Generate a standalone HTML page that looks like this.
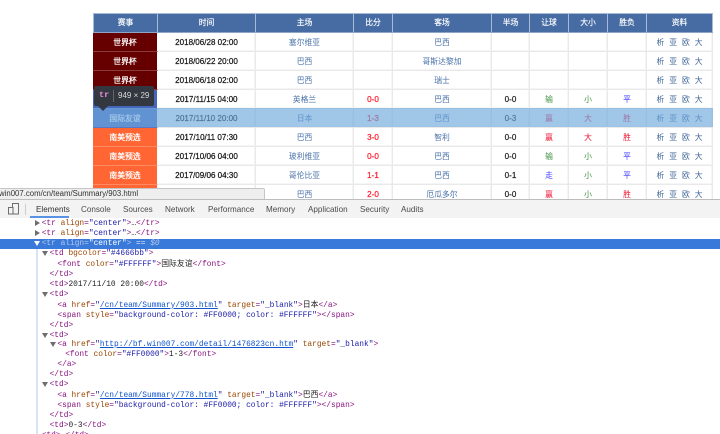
<!DOCTYPE html>
<html lang="zh">
<head>
<meta charset="utf-8">
<title>赛事</title>
<style>
html,body{margin:0;padding:0;background:#fff;}
body{width:720px;height:434px;overflow:hidden;position:relative;font-family:"Liberation Sans","Noto Sans CJK SC",sans-serif;}
#wrap{position:absolute;left:0;top:0;width:720px;height:434px;overflow:hidden;filter:blur(.3px);}
table{position:absolute;left:93px;top:13px;border-collapse:separate;border-spacing:0;table-layout:fixed;width:620px;font-size:7.8px;color:#222;}
td,th{text-align:center;white-space:nowrap;overflow:hidden;}
td{padding:1px 0 0;height:17px;line-height:17px;border-right:1px solid #e9e9e9;border-bottom:1px solid #e9e9e9;box-shadow:inset -1px -1px 0 #f5f5f5;}
th{padding:0;background:#466ca3;color:#fff;font-weight:normal;height:18px;line-height:18px;border-right:1px solid #a8bbd6;border-top:1px solid #a8bbd6;border-bottom:1px solid #8ea5c6;-webkit-text-stroke:.15px #fff;}
th:first-child{border-left:1px solid #a8bbd6;}
.w{background:#660000;color:#fff;-webkit-text-stroke:.25px #fff;border-right:1px solid #fff;border-bottom:1px solid #8a3a3a;box-shadow:none;}
.f{background:#4666bb;color:#fff;-webkit-text-stroke:.25px #fff;border-right:1px solid #fff;border-bottom:1px solid #5a78c6;box-shadow:none;}
.s{background:#ff6633;color:#fff;-webkit-text-stroke:.25px #fff;border-right:1px solid #fff;border-bottom:1px solid #ff8a63;box-shadow:none;}
.t{font-size:8.05px;color:#111;-webkit-text-stroke:.2px #111;}
.l{color:#4a72aa;}
.r{color:#ff2030;font-size:8.05px;-webkit-text-stroke:.25px #ff2030;}
.k{color:#222;font-size:8.05px;-webkit-text-stroke:.2px #222;}
.g{color:#3f8f3f;}
.b{color:#3a3aff;}
.x{color:#f01030;}
.d{color:#3f6596;word-spacing:2.8px;}
#hl{position:absolute;left:93px;top:108px;width:620px;height:19px;background:rgba(111,168,220,.66);}
#tip{position:absolute;left:94px;top:86px;width:60px;height:20px;background:#333740;border-radius:2px;color:#d9d9d9;font-size:8px;line-height:19px;}
#tip b{position:absolute;left:5px;top:0;font:bold 8.6px/19px "Liberation Mono",monospace;color:#e88fd8;}
#tip i{position:absolute;left:19px;top:4px;width:1px;height:12px;background:#666;}
#tip span{position:absolute;left:24px;top:0;}
#arr{position:absolute;left:98px;top:106px;width:0;height:0;border-left:5px solid transparent;border-right:5px solid transparent;border-top:5px solid #333740;}
#st{position:absolute;left:-2px;top:188px;width:265px;height:10px;background:#eeeeee;border:1px solid #c6c6c6;font-size:7.8px;line-height:10px;color:#333;white-space:nowrap;border-radius:0 2px 0 0;}
#tb{position:absolute;left:0;top:199px;width:720px;height:18px;background:#f3f3f3;border-top:1px solid #bdbdbd;border-bottom:1px solid #ccc;}
#tb span{position:absolute;top:0;font-size:8.1px;line-height:19px;color:#4a4a4a;white-space:nowrap;}
#tb u{position:absolute;left:30px;top:16px;width:39px;height:2px;background:#5a93e6;}
#sep{position:absolute;left:25px;top:4px;width:1px;height:11px;background:#ccc;}
#ico{position:absolute;left:8px;top:3px;}
#el{position:absolute;left:0;top:218px;width:720px;height:216px;background:#fff;overflow:hidden;}
#sel{position:absolute;left:0;top:21px;width:720px;height:10px;background:#3879d9;}
#gut{position:absolute;left:36px;top:31px;width:2px;height:185px;background:#d7e4f7;}
.ln{position:absolute;font:7.86px/10px "Liberation Mono","Noto Sans CJK SC",monospace;white-space:pre;color:#222;}
.n{color:#881280;}
.a{color:#994500;}
.v{color:#1a1aa6;}
.h{color:#1155cc;text-decoration:underline;}
.sl{color:#dbe6f7;}
.sl .n,.sl .a{color:#b5c9ec;}
.sl .v{color:#fff;}
.sl em{font-style:italic;color:#b5c9ec;}
.ar{position:absolute;width:0;height:0;}
.ar.o{border-left:3px solid transparent;border-right:3px solid transparent;border-top:5px solid #6e6e6e;}
.ar.c{border-top:3px solid transparent;border-bottom:3px solid transparent;border-left:5px solid #6e6e6e;}
</style>
</head>
<body>
<div id="wrap">
<table>
<colgroup><col style="width:65px"><col style="width:98px"><col style="width:98px"><col style="width:39px"><col style="width:99px"><col style="width:38px"><col style="width:39px"><col style="width:39px"><col style="width:39px"><col style="width:66px"></colgroup>
<tr><th>赛事</th><th>时间</th><th>主场</th><th>比分</th><th>客场</th><th>半场</th><th>让球</th><th>大小</th><th>胜负</th><th>资料</th></tr>
<tr><td class="w">世界杯</td><td class="t">2018/06/28 02:00</td><td class="l">塞尔维亚</td><td></td><td class="l">巴西</td><td></td><td></td><td></td><td></td><td class="d">析 亚 欧 大</td></tr>
<tr><td class="w">世界杯</td><td class="t">2018/06/22 20:00</td><td class="l">巴西</td><td></td><td class="l">哥斯达黎加</td><td></td><td></td><td></td><td></td><td class="d">析 亚 欧 大</td></tr>
<tr><td class="w">世界杯</td><td class="t">2018/06/18 02:00</td><td class="l">巴西</td><td></td><td class="l">瑞士</td><td></td><td></td><td></td><td></td><td class="d">析 亚 欧 大</td></tr>
<tr><td class="f">国际友谊</td><td class="t">2017/11/15 04:00</td><td class="l">英格兰</td><td class="r">0-0</td><td class="l">巴西</td><td class="k">0-0</td><td class="g">输</td><td class="g">小</td><td class="b">平</td><td class="d">析 亚 欧 大</td></tr>
<tr><td class="f">国际友谊</td><td class="t">2017/11/10 20:00</td><td class="l">日本</td><td class="r">1-3</td><td class="l">巴西</td><td class="k">0-3</td><td class="x">赢</td><td class="x">大</td><td class="x">胜</td><td class="d">析 亚 欧 大</td></tr>
<tr><td class="s">南美预选</td><td class="t">2017/10/11 07:30</td><td class="l">巴西</td><td class="r">3-0</td><td class="l">智利</td><td class="k">0-0</td><td class="x">赢</td><td class="x">大</td><td class="x">胜</td><td class="d">析 亚 欧 大</td></tr>
<tr><td class="s">南美预选</td><td class="t">2017/10/06 04:00</td><td class="l">玻利维亚</td><td class="r">0-0</td><td class="l">巴西</td><td class="k">0-0</td><td class="g">输</td><td class="g">小</td><td class="b">平</td><td class="d">析 亚 欧 大</td></tr>
<tr><td class="s">南美预选</td><td class="t">2017/09/06 04:30</td><td class="l">哥伦比亚</td><td class="r">1-1</td><td class="l">巴西</td><td class="k">0-1</td><td class="b">走</td><td class="g">小</td><td class="b">平</td><td class="d">析 亚 欧 大</td></tr>
<tr><td class="s">南美预选</td><td class="t">2017/09/01 07:30</td><td class="l">巴西</td><td class="r">2-0</td><td class="l">厄瓜多尔</td><td class="k">0-0</td><td class="x">赢</td><td class="g">小</td><td class="x">胜</td><td class="d">析 亚 欧 大</td></tr>
</table>
<div id="hl"></div>
<div id="arr"></div>
<div id="tip"><b>tr</b><i></i><span>949 × 29</span></div>
<div id="st">win007.com/cn/team/Summary/903.html</div>
<div id="tb">
<svg id="ico" width="12" height="12" viewBox="0 0 12 12" fill="none" stroke="#6e6e6e" stroke-width="1"><rect x="4.5" y="0.5" width="6" height="10.5"/><rect x="0.5" y="4.5" width="4.5" height="6.5" fill="#f3f3f3"/></svg>
<div id="sep"></div>
<span style="left:36px;color:#333">Elements</span>
<span style="left:81px">Console</span>
<span style="left:123px">Sources</span>
<span style="left:165px">Network</span>
<span style="left:208px">Performance</span>
<span style="left:266px">Memory</span>
<span style="left:308px">Application</span>
<span style="left:360px">Security</span>
<span style="left:401px">Audits</span>
<u></u>
</div>
<div id="el">
<div id="sel"></div>
<div id="gut"></div>
<div class="ar c" style="left:35px;top:2px"></div>
<div class="ln" style="left:41.7px;top:1px"><span class="n">&lt;tr</span> <span class="a">align</span><span class="n">=</span><span class="v">"center"</span><span class="n">&gt;</span>…<span class="n">&lt;/tr&gt;</span></div>
<div class="ar c" style="left:35px;top:12px"></div>
<div class="ln" style="left:41.7px;top:11px"><span class="n">&lt;tr</span> <span class="a">align</span><span class="n">=</span><span class="v">"center"</span><span class="n">&gt;</span>…<span class="n">&lt;/tr&gt;</span></div>
<div class="ar o" style="left:34px;top:23px;border-top-color:#fff"></div>
<div class="ln sl" style="left:41.7px;top:21px"><span class="n">&lt;tr</span> <span class="a">align</span><span class="n">=</span><span class="v">"center"</span><span class="n">&gt;</span> == <em>$0</em></div>
<div class="ar o" style="left:42px;top:33px"></div>
<div class="ln" style="left:49.6px;top:31px"><span class="n">&lt;td</span> <span class="a">bgcolor</span><span class="n">=</span><span class="v">"#4666bb"</span><span class="n">&gt;</span></div>
<div class="ln" style="left:57.4px;top:42px"><span class="n">&lt;font</span> <span class="a">color</span><span class="n">=</span><span class="v">"#FFFFFF"</span><span class="n">&gt;</span>国际友谊<span class="n">&lt;/font&gt;</span></div>
<div class="ln" style="left:49.6px;top:52px"><span class="n">&lt;/td&gt;</span></div>
<div class="ln" style="left:49.6px;top:62px"><span class="n">&lt;td&gt;</span>2017/11/10 20:00<span class="n">&lt;/td&gt;</span></div>
<div class="ar o" style="left:42px;top:74px"></div>
<div class="ln" style="left:49.6px;top:72px"><span class="n">&lt;td&gt;</span></div>
<div class="ln" style="left:57.4px;top:83px"><span class="n">&lt;a</span> <span class="a">href</span><span class="n">=</span><span class="v">"</span><span class="h">/cn/team/Summary/903.html</span><span class="v">"</span> <span class="a">target</span><span class="n">=</span><span class="v">"_blank"</span><span class="n">&gt;</span>日本<span class="n">&lt;/a&gt;</span></div>
<div class="ln" style="left:57.4px;top:93px"><span class="n">&lt;span</span> <span class="a">style</span><span class="n">=</span><span class="v">"background-color: #FF0000; color: #FFFFFF"</span><span class="n">&gt;&lt;/span&gt;</span></div>
<div class="ln" style="left:49.6px;top:103px"><span class="n">&lt;/td&gt;</span></div>
<div class="ar o" style="left:42px;top:115px"></div>
<div class="ln" style="left:49.6px;top:113px"><span class="n">&lt;td&gt;</span></div>
<div class="ar o" style="left:50px;top:124px"></div>
<div class="ln" style="left:57.4px;top:122px"><span class="n">&lt;a</span> <span class="a">href</span><span class="n">=</span><span class="v">"</span><span class="h">http://bf.win007.com/detail/1476823cn.htm</span><span class="v">"</span> <span class="a">target</span><span class="n">=</span><span class="v">"_blank"</span><span class="n">&gt;</span></div>
<div class="ln" style="left:65.2px;top:132px"><span class="n">&lt;font</span> <span class="a">color</span><span class="n">=</span><span class="v">"#FF0000"</span><span class="n">&gt;</span>1-3<span class="n">&lt;/font&gt;</span></div>
<div class="ln" style="left:57.4px;top:142px"><span class="n">&lt;/a&gt;</span></div>
<div class="ln" style="left:49.6px;top:152px"><span class="n">&lt;/td&gt;</span></div>
<div class="ar o" style="left:42px;top:164px"></div>
<div class="ln" style="left:49.6px;top:162px"><span class="n">&lt;td&gt;</span></div>
<div class="ln" style="left:57.4px;top:173px"><span class="n">&lt;a</span> <span class="a">href</span><span class="n">=</span><span class="v">"</span><span class="h">/cn/team/Summary/778.html</span><span class="v">"</span> <span class="a">target</span><span class="n">=</span><span class="v">"_blank"</span><span class="n">&gt;</span>巴西<span class="n">&lt;/a&gt;</span></div>
<div class="ln" style="left:57.4px;top:183px"><span class="n">&lt;span</span> <span class="a">style</span><span class="n">=</span><span class="v">"background-color: #FF0000; color: #FFFFFF"</span><span class="n">&gt;&lt;/span&gt;</span></div>
<div class="ln" style="left:49.6px;top:193px"><span class="n">&lt;/td&gt;</span></div>
<div class="ln" style="left:49.6px;top:203px"><span class="n">&lt;td&gt;</span>0-3<span class="n">&lt;/td&gt;</span></div>
<div class="ln" style="left:41.7px;top:213px"><span class="n">&lt;td&gt;</span>…<span class="n">&lt;/td&gt;</span></div>
</div>
</div>
</body>
</html>
